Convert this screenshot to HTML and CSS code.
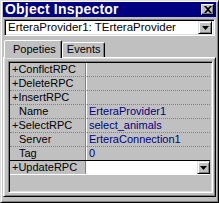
FILE: index.html
```html
<!DOCTYPE html>
<html>
<head>
<meta charset="utf-8">
<link rel="stylesheet" href="styles.css">
</head>
<body>
<div class="window">
  <div class="caption">
    <span class="title">Object Inspector</span>
    <span class="btn close-btn"><svg width="8" height="7" viewBox="0 0 8 7"><path d="M0 0h2l2 2 2-2h2L5 3.5 8 7H6L4 5 2 7H0l3-3.5z" fill="#000"/></svg></span>
  </div>
  <div class="combo">
    <span class="combo-text">ErteraProvider1: TErteraProvider</span>
    <span class="btn combo-btn"><svg width="7" height="4" viewBox="0 0 7 4"><path d="M0 0h7L3.5 4z" fill="#000"/></svg></span>
  </div>
  <div class="tabs">
    <div class="tab active">Popeties</div>
    <div class="tab">Events</div>
  </div>
  <div class="page">
    <div class="grid">
      <div class="row"><div class="name plus">+ConflctRPC</div><div class="value"></div></div>
      <div class="row"><div class="name plus">+DeleteRPC</div><div class="value"></div></div>
      <div class="row"><div class="name plus">+InsertRPC</div><div class="value"></div></div>
      <div class="row"><div class="name">Name</div><div class="value">ErteraProvider1</div></div>
      <div class="row"><div class="name plus">+SelectRPC</div><div class="value">select_animals</div></div>
      <div class="row"><div class="name">Server</div><div class="value">ErteraConnection1</div></div>
      <div class="row"><div class="name">Tag</div><div class="value">0</div></div>
      <div class="row selected"><div class="name plus">+UpdateRPC</div><div class="value edit"><span class="btn edit-btn"><svg width="7" height="4" viewBox="0 0 7 4"><path d="M0 0h7L3.5 4z" fill="#000"/></svg></span></div></div>
    </div>
  </div>
</div>
</body>
</html>
```
FILE: styles.css
```css
html, body {
  margin: 0;
  padding: 0;
  background: #c0c0c0;
}
body {
  font-family: "Liberation Sans", Arial, sans-serif;
  font-size: 11px;
  color: #000;
}
.window {
  box-sizing: border-box;
  width: 219px;
  height: 203px;
  background: #c0c0c0;
  border: 1px solid;
  border-color: #dfdfdf #000 #000 #dfdfdf;
  box-shadow: inset 1px 1px #fff, inset -1px -1px #808080;
  padding: 0 2px 2px 2px;
  display: flex;
  flex-direction: column;
}
.caption {
  height: 15px;
  margin-top: 1px;
  background: #000080;
  display: flex;
  align-items: center;
  justify-content: space-between;
  padding: 0 2px 0 2px;
}
.title {
  color: #fff;
  font-weight: bold;
  font-size: 14px;
  line-height: 15px;
  letter-spacing: 0.2px;
}
.btn {
  box-sizing: border-box;
  background: #c0c0c0;
  border: 1px solid;
  border-color: #fff #000 #000 #fff;
  box-shadow: inset -1px -1px #808080;
  display: flex;
  align-items: center;
  justify-content: center;
}
.close-btn {
  width: 13px;
  height: 11px;
}
.combo {
  box-sizing: border-box;
  height: 17px;
  margin: 2px 1px 0 1px;
  background: #fff;
  border: 1px solid;
  border-color: #808080 #fff #fff #808080;
  box-shadow: inset 1px 1px #000, inset -1px -1px #dfdfdf;
  padding: 2px;
  display: flex;
  align-items: center;
  justify-content: space-between;
}
.combo-text {
  font-size: 11.5px;
  padding-left: 1px;
  line-height: 13px;
}
.combo-btn {
  width: 14px;
  height: 13px;
  border-color: #dfdfdf #000 #000 #dfdfdf;
  box-shadow: inset 1px 1px #fff, inset -1px -1px #808080;
}
.tabs {
  display: flex;
  margin-top: 4px;
  padding-left: 1px;
  height: 17px;
  align-items: flex-end;
  position: relative;
  z-index: 1;
}
.tab {
  box-sizing: border-box;
  height: 15px;
  line-height: 13px;
  padding: 0 4px;
  border: 1px solid;
  border-bottom: none;
  border-color: #fff #000 transparent #fff;
  box-shadow: inset -1px 0 #808080;
  border-radius: 2px 2px 0 0;
  background: #c0c0c0;
  font-size: 11px;
}
.tab.active {
  height: 18px;
  line-height: 16px;
  margin-bottom: -1px;
  padding: 0 5px 0 8px;
}
.page {
  flex: 1;
  margin: 0 0 3px 0;
  border: 1px solid;
  border-color: #fff #000 #000 #fff;
  box-shadow: inset 1px 1px #dfdfdf, inset -1px -1px #808080;
  padding: 3px 2px 3px 4px;
  display: flex;
  flex-direction: column;
}
.grid {
  flex: 1;
  border: 1px solid;
  border-color: #808080 #fff #fff #808080;
  box-shadow: inset 1px 1px #000, inset -1px -1px #dfdfdf;
  padding: 1px 2px 1px 1px;
}
.row {
  display: flex;
  height: 14px;
  box-sizing: border-box;
  border-bottom: 1px dotted #808080;
}
.name {
  width: 76px;
  box-sizing: border-box;
  padding-left: 9px;
  line-height: 13px;
  border-right: 1px solid #808080;
  box-shadow: 1px 0 #fff;
  white-space: nowrap;
  overflow: hidden;
}
.name.plus {
  padding-left: 2px;
}
.value {
  flex: 1;
  padding-left: 3px;
  line-height: 13px;
  color: #000080;
  white-space: nowrap;
  overflow: hidden;
}
.row.selected {
  border-top: 1px solid #000;
  border-bottom: 1px solid #fff;
  height: 15px;
  margin-top: -1px;
}
.value.edit {
  background: #fff;
  display: flex;
  justify-content: flex-end;
  padding: 0;
  margin-left: 1px;
}
.edit-btn {
  width: 13px;
  height: 13px;
  border-color: #dfdfdf #000 #000 #dfdfdf;
  box-shadow: inset 1px 1px #fff, inset -1px -1px #808080;
}
```
